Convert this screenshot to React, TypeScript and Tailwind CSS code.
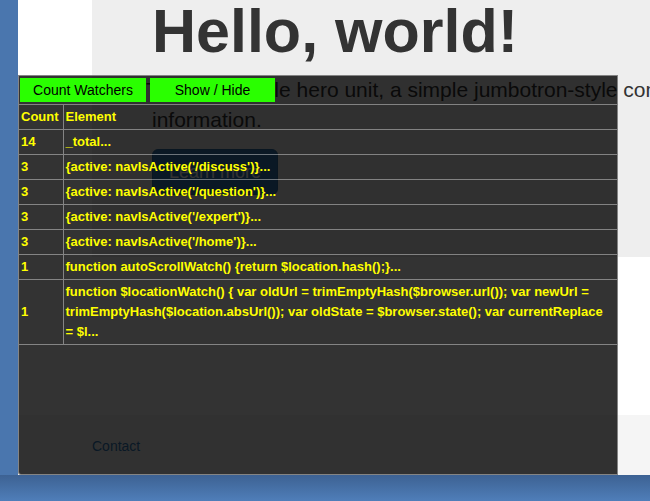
export default function App() {
  const rows: { count: string; el: React.ReactNode }[] = [
    { count: "14", el: "_total..." },
    { count: "3", el: "{active: navIsActive('/discuss')}..." },
    { count: "3", el: "{active: navIsActive('/question')}..." },
    { count: "3", el: "{active: navIsActive('/expert')}..." },
    { count: "3", el: "{active: navIsActive('/home')}..." },
    { count: "1", el: "function autoScrollWatch() {return $location.hash();}..." },
    {
      count: "1",
      el: (
        <>
          function $locationWatch() {"{"} var oldUrl = trimEmptyHash($browser.url()); var newUrl =
          <br />
          trimEmptyHash($location.absUrl()); var oldState = $browser.state(); var currentReplace
          <br />= $l...
        </>
      ),
    },
  ];

  return (
    <div className="w-[650px] h-[501px] overflow-hidden flex flex-col bg-[#4a76ae] font-['Liberation_Sans',Arial,sans-serif]">
      <div className="h-[475px] pl-[18px] flex shrink-0">
        <div className="relative flex-1 bg-white overflow-hidden">
          <div className="flex flex-col h-full">
            <div className="ml-[74px] h-[257px] w-[1200px] bg-[#eeeeee] pl-[60px] shrink-0">
              <h1 className="text-[61px] leading-[63px] font-bold text-[#333333] whitespace-nowrap">Hello, world!</h1>
              <p className="mt-[12px] text-[21px] leading-[30px] text-[#333333] whitespace-nowrap indent-[-6px]">
                This is a simple hero unit, a simple jumbotron-style component for calling extra attention to featured content or
                <br />
                information.
              </p>
              <button className="mt-[14px] rounded-[6px] border border-[#2e6da4] bg-[#337ab7] px-4 py-[10px] text-[18px] leading-[24px] text-white">
                Learn more
              </button>
            </div>
            <div className="flex-1" />
            <div className="h-[60px] shrink-0 bg-[#f5f5f5] pl-[74px] pt-[19px]">
              <a className="text-[14px] leading-[20px] text-[#337ab7]">Contact</a>
            </div>
          </div>

          <div className="absolute left-0 top-[75px] w-[600px] h-[400px] bg-black/80 border border-white/40 rounded-bl-[3px]">
            <div className="flex gap-[4px] pl-[1px] pt-[2px]">
              <button className="w-[126px] h-[24px] bg-[#2aff00] text-[14px] text-black">Count Watchers</button>
              <button className="w-[125px] h-[24px] bg-[#2aff00] text-[14px] text-black">Show / Hide</button>
            </div>
            <table className="mt-[2px] w-full table-fixed border-collapse text-[13px] font-bold text-[#ffff00]">
              <colgroup>
                <col className="w-[44px]" />
                <col />
              </colgroup>
              <tbody>
                <tr className="border-y border-white/40">
                  <td className="border-r border-white/40 px-[2px] py-[2px] leading-[20px] align-middle">Count</td>
                  <td className="px-[2px] py-[2px] leading-[20px] align-middle">Element</td>
                </tr>
                {rows.map((r, i) => (
                  <tr key={i} className="border-y border-white/40">
                    <td className="border-r border-white/40 px-[2px] py-[2px] leading-[20px] align-middle">{r.count}</td>
                    <td className="px-[2px] py-[2px] leading-[20px] align-middle whitespace-nowrap">{r.el}</td>
                  </tr>
                ))}
              </tbody>
            </table>
          </div>
        </div>
      </div>
      <div className="flex-1 bg-gradient-to-b from-[#3d6293] to-[#4f7eb9]" />
    </div>
  );
}
